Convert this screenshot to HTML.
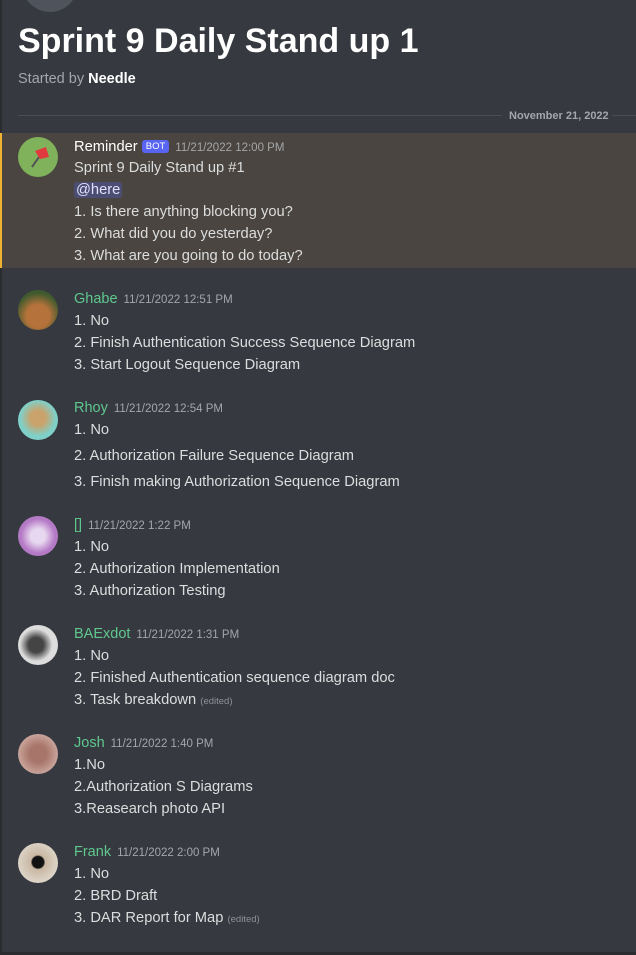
<!DOCTYPE html><html><head><meta charset="utf-8"><style>
body{margin:0;width:636px;height:955px;background:#36393f;font-family:"Liberation Sans",sans-serif;position:relative;overflow:hidden;color:#dcddde}
.a{position:absolute;white-space:nowrap}
.l{position:absolute;left:74px;font-size:14.7px;line-height:22px;color:#dcddde;white-space:nowrap;margin-top:1px}
.n{font-weight:500;color:#5fc88f;font-size:14.5px}
.t{font-size:11.5px;color:#a3a6aa;margin-left:6px}
.av{position:absolute;left:18px;width:40px;height:40px;border-radius:50%}
.ed{font-size:9.5px;color:#8e9297}
</style></head><body>
<div class="a" style="left:0;top:0;width:2px;height:955px;background:#2a2c30"></div>
<div class="a" style="left:22px;top:-44px;width:56px;height:56px;border-radius:50%;background:#4f545c"></div>
<div class="a" style="left:18px;top:19px;font-size:34px;font-weight:bold;color:#fff;line-height:44px">Sprint 9 Daily Stand up 1</div>
<div class="a" style="left:18px;top:70px;font-size:14.5px;color:#a3a6aa;line-height:18px">Started by <b style="color:#fff">Needle</b></div>
<div class="a" style="left:18px;top:115px;width:484px;height:1px;background:#4a4d53"></div>
<div class="a" style="left:612px;top:115px;width:24px;height:1px;background:#4a4d53"></div>
<div class="a" style="left:509px;top:108px;font-size:11px;font-weight:bold;color:#a3a6aa;line-height:16px">November 21, 2022</div>
<div class="a" style="left:0;top:133px;width:636px;height:135px;background:#4a4540;border-left:2px solid #f0b232;box-sizing:border-box"></div>
<div class="av" style="top:137px;background:#7fb25a"><svg width="40" height="40"><line x1="14" y1="30" x2="21" y2="20" stroke="#555" stroke-width="2"/><path d="M17 14 L28 10 L31 20 L22 22Z" fill="#e0393e"/></svg></div>
<div class="l" style="top:135px"><span style="color:#fff;font-weight:500">Reminder</span> <span style="background:#5865f2;color:#fff;font-size:9.5px;padding:1px 4px;border-radius:3px;vertical-align:2px">BOT</span><span class="t">11/21/2022 12:00 PM</span></div>
<div class="l" style="top:156px">Sprint 9 Daily Stand up #1</div>
<div class="l" style="top:178px"><span style="background:#4b4e72;color:#dee0fc;padding:0 2px;border-radius:3px">@here</span></div>
<div class="l" style="top:200px">1. Is there anything blocking you?</div>
<div class="l" style="top:222px">2. What did you do yesterday?</div>
<div class="l" style="top:244px">3. What are you going to do today?</div>

<div class="av" style="top:290px;background:radial-gradient(circle at 50% 65%,#b5723a 35%,#3f5a2e 70%)"></div>
<div class="l" style="top:287px"><span class="n">Ghabe</span><span class="t">11/21/2022 12:51 PM</span></div>
<div class="l" style="top:309px">1. No</div>
<div class="l" style="top:331px">2. Finish Authentication Success Sequence Diagram</div>
<div class="l" style="top:353px">3. Start Logout Sequence Diagram</div>

<div class="av" style="top:400px;background:radial-gradient(circle at 50% 45%,#c9a36b 25%,#7fd0c9 60%)"></div>
<div class="l" style="top:396px"><span class="n">Rhoy</span><span class="t">11/21/2022 12:54 PM</span></div>
<div class="l" style="top:418px">1. No</div>
<div class="l" style="top:444px">2. Authorization Failure Sequence Diagram</div>
<div class="l" style="top:470px">3. Finish making Authorization Sequence Diagram</div>

<div class="av" style="top:516px;background:radial-gradient(circle at 50% 50%,#e8d8ef 25%,#b57ac6 60%)"></div>
<div class="l" style="top:513px"><span class="n">[]</span><span class="t">11/21/2022 1:22 PM</span></div>
<div class="l" style="top:535px">1. No</div>
<div class="l" style="top:557px">2. Authorization Implementation</div>
<div class="l" style="top:579px">3. Authorization Testing</div>

<div class="av" style="top:625px;background:radial-gradient(circle at 45% 50%,#444 25%,#ddd 55%)"></div>
<div class="l" style="top:622px"><span class="n">BAExdot</span><span class="t">11/21/2022 1:31 PM</span></div>
<div class="l" style="top:644px">1. No</div>
<div class="l" style="top:666px">2. Finished Authentication sequence diagram doc</div>
<div class="l" style="top:688px">3. Task breakdown <span class="ed">(edited)</span></div>

<div class="av" style="top:734px;background:radial-gradient(circle at 50% 50%,#a8756a 30%,#c9a49a 70%)"></div>
<div class="l" style="top:731px"><span class="n">Josh</span><span class="t">11/21/2022 1:40 PM</span></div>
<div class="l" style="top:753px">1.No</div>
<div class="l" style="top:775px">2.Authorization S Diagrams</div>
<div class="l" style="top:797px">3.Reasearch photo API</div>

<div class="av" style="top:843px;background:radial-gradient(circle at 50% 48%,#111 20%,#c9b7a3 25%,#ddd5c8 70%)"></div>
<div class="l" style="top:840px"><span class="n">Frank</span><span class="t">11/21/2022 2:00 PM</span></div>
<div class="l" style="top:862px">1. No</div>
<div class="l" style="top:884px">2. BRD Draft</div>
<div class="l" style="top:906px">3. DAR Report for Map <span class="ed">(edited)</span></div>
<div class="a" style="left:0;top:952px;width:636px;height:3px;background:#2a2c30"></div>
</body></html>
